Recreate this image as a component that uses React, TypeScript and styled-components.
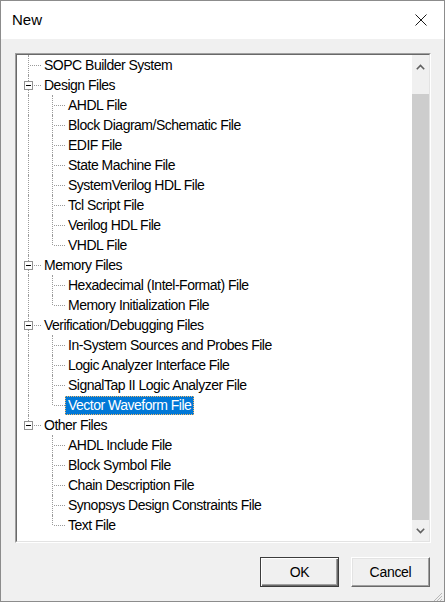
import React from "react";
import styled, { createGlobalStyle, css } from "styled-components";

type Node = { label: string; children?: Node[] };
type GuideKind = "line" | "tee" | "corner" | "blank";
type Row = { label: string; guides: GuideKind[]; expandable: boolean };

const tree: Node[] = [
    { label: "SOPC Builder System" },
    {
        label: "Design Files",
        children: [
            { label: "AHDL File" },
            { label: "Block Diagram/Schematic File" },
            { label: "EDIF File" },
            { label: "State Machine File" },
            { label: "SystemVerilog HDL File" },
            { label: "Tcl Script File" },
            { label: "Verilog HDL File" },
            { label: "VHDL File" },
        ],
    },
    {
        label: "Memory Files",
        children: [
            { label: "Hexadecimal (Intel-Format) File" },
            { label: "Memory Initialization File" },
        ],
    },
    {
        label: "Verification/Debugging Files",
        children: [
            { label: "In-System Sources and Probes File" },
            { label: "Logic Analyzer Interface File" },
            { label: "SignalTap II Logic Analyzer File" },
            { label: "Vector Waveform File" },
        ],
    },
    {
        label: "Other Files",
        children: [
            { label: "AHDL Include File" },
            { label: "Block Symbol File" },
            { label: "Chain Description File" },
            { label: "Synopsys Design Constraints File" },
            { label: "Text File" },
        ],
    },
];

const flatten = (nodes: Node[], parents: GuideKind[] = []): Row[] => {
    const out: Row[] = [];
    nodes.forEach((n, i) => {
        const last = i === nodes.length - 1;
        out.push({ label: n.label, guides: [...parents, last ? "corner" : "tee"], expandable: !!n.children });
        if (n.children) out.push(...flatten(n.children, [...parents, last ? "blank" : "line"]));
    });
    return out;
};

const rows = flatten(tree);
const selected = "Vector Waveform File";

const GlobalStyle = createGlobalStyle`
    html, body {
        margin: 0;
        padding: 0;
        background: #f0f0f0;
    }
    * { box-sizing: border-box; }
`;

const Chevron = ({ up }: { up?: boolean }) => (
    <svg width="9" height="6" viewBox="0 0 9 6">
        <polyline
            points={up ? "0.8,5.2 4.5,1.5 8.2,5.2" : "0.8,0.8 4.5,4.5 8.2,0.8"}
            fill="none"
            stroke="#606060"
            strokeWidth="1.6"
        />
    </svg>
);

const App = () => {
    return (
        <Window>
            <GlobalStyle />
            <TitleBar>
                <span className="tb-title">New</span>
                <CloseBtn>
                    <svg width="12" height="12" viewBox="0 0 12 12">
                        <path d="M0.5 0.5 L11.5 11.5 M11.5 0.5 L0.5 11.5" stroke="#1a1a1a" strokeWidth="1" />
                    </svg>
                </CloseBtn>
            </TitleBar>
            <Body>
                <Panel>
                    <PanelInner>
                        <TreeList>
                            {rows.map((r, index) => (
                                <TreeRow key={index}>
                                    {r.guides.map((g, gi) => (
                                        <Guide key={gi} $kind={g}>
                                            {gi === r.guides.length - 1 && r.expandable && <Expander />}
                                        </Guide>
                                    ))}
                                    <Label $selected={r.label === selected}>{r.label}</Label>
                                </TreeRow>
                            ))}
                        </TreeList>
                        <ScrollBar>
                            <ScrollBtn $h={24}><Chevron up /></ScrollBtn>
                            <ScrollTrack>
                                <Thumb />
                            </ScrollTrack>
                            <ScrollBtn $h={20}><Chevron /></ScrollBtn>
                        </ScrollBar>
                    </PanelInner>
                </Panel>
                <Footer>
                    <Button $default>OK</Button>
                    <Button>Cancel</Button>
                </Footer>
            </Body>
            <Grip>
                <svg width="12" height="12" viewBox="0 0 12 12">
                    <path d="M11 3 L3 11 M11 6 L6 11 M11 9 L9 11" stroke="#b8b8b8" strokeWidth="1" />
                </svg>
            </Grip>
        </Window>
    );
};

export default App;

const Window = styled.div`
    position: relative;
    width: 445px;
    height: 602px;
    border: 1px solid #8c8c8c;
    background: #f0f0f0;
    display: flex;
    flex-direction: column;
    font-family: "Liberation Sans", Arial, sans-serif;
    color: #000;
`;

const TitleBar = styled.div`
    height: 38px;
    background: #fff;
    display: flex;
    align-items: center;
    padding-left: 11px;
    .tb-title {
        font-size: 15px;
        padding-bottom: 1px;
    }
`;

const CloseBtn = styled.div`
    margin-left: auto;
    width: 46px;
    height: 38px;
    display: flex;
    align-items: center;
    justify-content: center;
    margin-right: 0;
    padding-left: 0;
    padding-bottom: 0;
`;

const Body = styled.div`
    flex: 1;
    display: flex;
    flex-direction: column;
    padding: 14px 13px 14px 14px;
    gap: 14px;
`;

const Panel = styled.div`
    height: 490px;
    border: 1px solid;
    border-color: #a0a0a0 #ffffff #ffffff #a0a0a0;
`;

const PanelInner = styled.div`
    height: 100%;
    display: flex;
    background: #fff;
    border: 1px solid;
    border-color: #696969 #e3e3e3 #e3e3e3 #696969;
`;

const TreeList = styled.div`
    flex: 1;
    display: flex;
    flex-direction: column;
    font-size: 14px;
    letter-spacing: -0.5px;
`;

const TreeRow = styled.div`
    display: flex;
    align-items: center;
    height: 20px;
`;

const dotted = "1px dotted #9a9a9a";

const Guide = styled.span<{ $kind: GuideKind }>`
    position: relative;
    flex: 0 0 24px;
    height: 20px;
    &::before {
        content: "";
        position: absolute;
        left: 11px;
        top: 0;
        border-left: ${dotted};
        height: ${(p) => (p.$kind === "corner" ? "10px" : "20px")};
        display: ${(p) => (p.$kind === "blank" ? "none" : "block")};
    }
    &::after {
        content: "";
        position: absolute;
        left: 13px;
        top: 10px;
        width: 11px;
        border-top: ${dotted};
        display: ${(p) => (p.$kind === "tee" || p.$kind === "corner" ? "block" : "none")};
    }
`;

const Expander = styled.span`
    position: absolute;
    left: 7px;
    top: 6px;
    width: 9px;
    height: 9px;
    border: 1px solid #919191;
    background: #fff;
    z-index: 1;
    &::after {
        content: "";
        position: absolute;
        left: 1px;
        top: 3px;
        width: 5px;
        height: 1px;
        background: #000;
    }
`;

const Label = styled.span<{ $selected?: boolean }>`
    margin-left: 0;
    padding: 0 3px;
    height: 19px;
    line-height: 19px;
    white-space: nowrap;
    ${(p) =>
        p.$selected &&
        css`
            background: #0078d7;
            color: #fff;
            outline: 1px dotted #f2b86a;
            outline-offset: -1px;
        `}
`;

const ScrollBar = styled.div`
    width: 17px;
    display: flex;
    flex-direction: column;
    background: #f0f0f0;
`;

const ScrollBtn = styled.div<{ $h: number }>`
    height: ${(p) => p.$h}px;
    display: flex;
    align-items: center;
    justify-content: center;
`;

const ScrollTrack = styled.div`
    flex: 1;
    padding-top: 15px;
    padding-bottom: 1px;
    display: flex;
    flex-direction: column;
`;

const Thumb = styled.div`
    flex: 1;
    background: #cdcdcd;
`;

const Footer = styled.div`
    display: flex;
    justify-content: flex-end;
    gap: 12px;
    padding-right: 1px;
`;

const Button = styled.button<{ $default?: boolean }>`
    width: 79px;
    height: 30px;
    font-family: "Liberation Sans", Arial, sans-serif;
    font-size: 14px;
    letter-spacing: -0.3px;
    color: #000;
    background: #f0f0f0;
    padding: 0;
    border: 1px solid;
    border-color: #ffffff #696969 #696969 #ffffff;
    box-shadow: inset -1px -1px 0 #a0a0a0, inset 1px 1px 0 #e3e3e3;
    ${(p) =>
        p.$default &&
        css`
            border-color: #3c3c3c;
            box-shadow: inset 1px 1px 0 #ffffff, inset -1px -1px 0 #696969, inset -2px -2px 0 #a0a0a0;
        `}
`;

const Grip = styled.div`
    position: absolute;
    right: 1px;
    bottom: 1px;
    width: 12px;
    height: 12px;
`;
